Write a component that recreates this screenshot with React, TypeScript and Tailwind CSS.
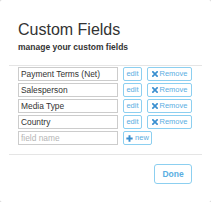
import React from "react";

const fields = ["Payment Terms (Net)", "Salesperson", "Media Type", "Country"];

function XIcon() {
  return (
    <svg width="6" height="6" viewBox="0 0 10 10" className="shrink-0">
      <path d="M1.5 1.5 L8.5 8.5 M8.5 1.5 L1.5 8.5" stroke="#3a8fd0" strokeWidth="2.8" strokeLinecap="square" />
    </svg>
  );
}

function PlusIcon() {
  return (
    <svg width="7" height="7" viewBox="0 0 10 10" className="shrink-0">
      <path d="M5 0.5 V9.5 M0.5 5 H9.5" stroke="#3a8fd0" strokeWidth="2.8" />
    </svg>
  );
}

export default function App() {
  return (
    <div className="w-[211px] h-[202px] bg-[#cfcfcf]" style={{ fontFamily: '"Liberation Sans", Arial, sans-serif' }}>
      <div className="w-full h-full bg-white rounded-[2px] flex flex-col">
        <div className="pl-[18px] pt-[20px]">
          <div className="text-[16px] leading-[20px] text-[#333]">Custom Fields</div>
          <div className="text-[8.5px] leading-[10px] font-bold text-[#333] mt-[2px]">manage your custom fields</div>
        </div>
        <div className="mx-[9px] mt-[13px] border-t border-[#e5e5e5]" />
        <div className="pl-[18px] pt-[1px] flex flex-col gap-[2px]">
          {fields.map((f) => (
            <div key={f} className="flex items-center h-[14px]">
              <div className="w-[100px] h-[14px] border border-[#cccccc] px-[2px] text-[8.4px] leading-[12px] text-[#333] flex items-center">
                {f}
              </div>
              <div className="ml-[5px] w-[19px] h-[14px] border border-[#8ccff0] rounded-[2px] text-[7.5px] text-[#5aaee2] flex items-center justify-center">
                edit
              </div>
              <div className="ml-[5px] w-[45px] h-[14px] border border-[#8ccff0] rounded-[2px] text-[7.5px] text-[#5aaee2] flex items-center justify-center gap-[2px]">
                <XIcon />
                <span>Remove</span>
              </div>
            </div>
          ))}
          <div className="flex items-center h-[14px]">
            <div className="w-[100px] h-[14px] border border-[#cccccc] px-[2px] text-[8.4px] leading-[12px] text-[#b5b5b5] flex items-center">
              field name
            </div>
            <div className="ml-[5px] w-[29px] h-[14px] border border-[#8ccff0] rounded-[2px] text-[7.5px] text-[#5aaee2] flex items-center justify-center gap-[2px]">
              <PlusIcon />
              <span>new</span>
            </div>
          </div>
        </div>
        <div className="mx-[9px] mt-[9px] border-t border-[#e5e5e5]" />
        <div className="flex justify-end pr-[19px] pt-[9px]">
          <div className="w-[38px] h-[20px] border border-[#8ccff0] rounded-[3px] text-[8.5px] font-bold text-[#5aaee2] flex items-center justify-center">
            Done
          </div>
        </div>
      </div>
    </div>
  );
}
